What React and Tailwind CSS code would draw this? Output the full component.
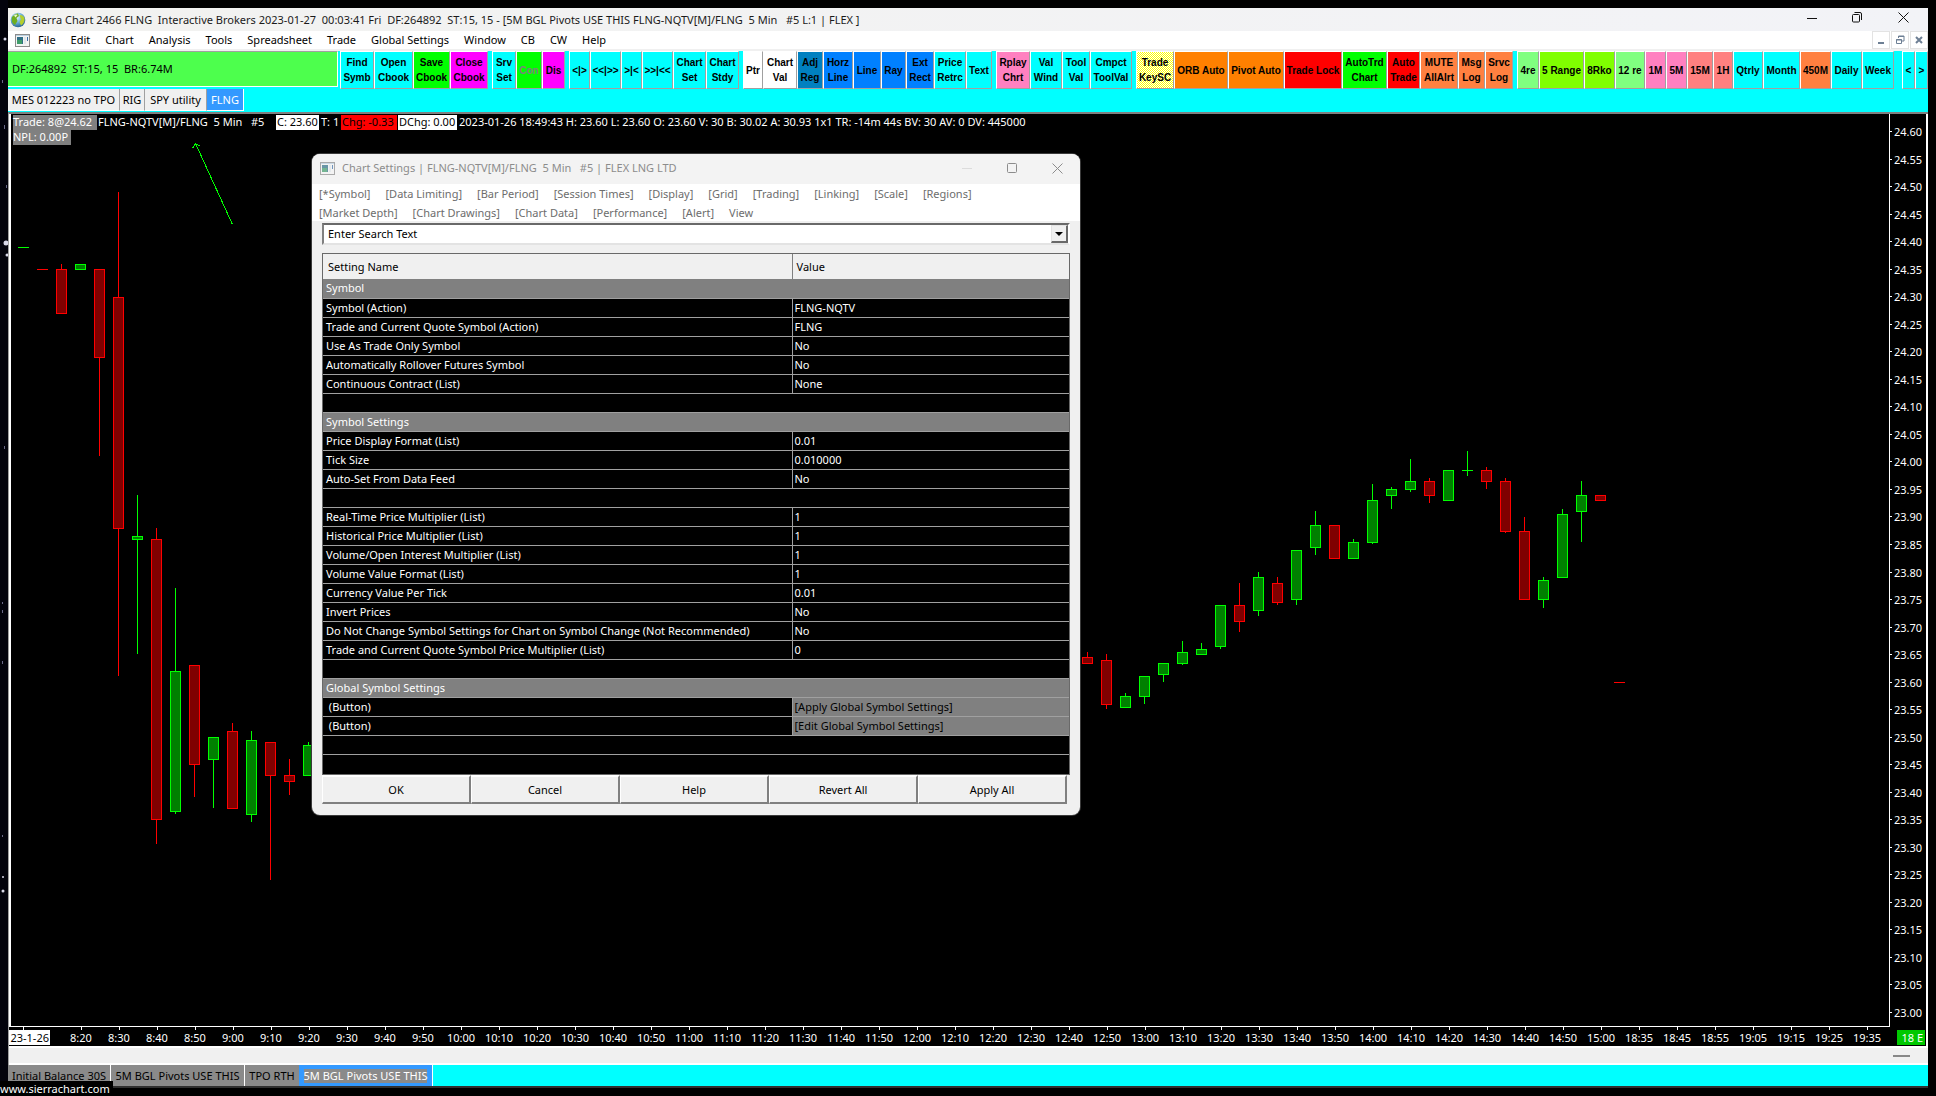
import React from "react";

const CYAN = "bg-[#00ffff]";

const MENUS = ["File", "Edit", "Chart", "Analysis", "Tools", "Spreadsheet", "Trade", "Global Settings", "Window", "CB", "CW", "Help"];

const TOOL_GROUPS = [
  [
    ["Find\nSymb", "w-[34px] bg-[#00ffff]"],
    ["Open\nCbook", "w-[39px] bg-[#00ffff]"],
    ["Save\nCbook", "w-[37px] bg-[#00ff00]"],
    ["Close\nCbook", "w-[38px] bg-[#ff00ff]"],
  ],
  [
    ["Srv\nSet", "w-[24px] bg-[#00ffff]"],
    ["Con", "w-[26px] bg-[#00ff00] text-[#808080]"],
    ["Dis", "w-[23px] bg-[#ff00ff]"],
  ],
  [
    ["<|>", "w-[21px] bg-[#00ffff]"],
    ["<<|>>", "w-[31px] bg-[#00ffff]"],
    [">|<", "w-[21px] bg-[#00ffff]"],
    [">>|<<", "w-[31px] bg-[#00ffff]"],
    ["Chart\nSet", "w-[33px] bg-[#00ffff]"],
    ["Chart\nStdy", "w-[33px] bg-[#00ffff]"],
  ],
  [
    ["Ptr", "w-[20px] bg-white"],
    ["Chart\nVal", "w-[34px] bg-white"],
    ["Adj\nReg", "w-[26px] bg-[#0080c0]"],
    ["Horz\nLine", "w-[30px] bg-[#0080ff]"],
    ["Line", "w-[28px] bg-[#0080ff]"],
    ["Ray", "w-[25px] bg-[#0080ff]"],
    ["Ext\nRect", "w-[28px] bg-[#0080ff]"],
    ["Price\nRetrc", "w-[32px] bg-[#00ffff]"],
    ["Text", "w-[26px] bg-[#00ffff]"],
  ],
  [
    ["Rplay\nChrt", "w-[34px] bg-[#ff80c0]"],
    ["Val\nWind", "w-[32px] bg-[#00ffff]"],
    ["Tool\nVal", "w-[28px] bg-[#00ffff]"],
    ["Cmpct\nToolVal", "w-[42px] bg-[#00ffff]"],
  ],
  [
    ["Trade\nKeySC", "w-[38px] bg-[repeating-conic-gradient(#ffff00_0_25%,#ffffff_0_50%)] bg-[length:2px_2px]"],
    ["ORB Auto", "w-[54px] bg-[#ff8000]"],
    ["Pivot Auto", "w-[56px] bg-[#ff8000]"],
    ["Trade Lock", "w-[58px] bg-[#ff0000]"],
    ["AutoTrd\nChart", "w-[45px] bg-[#00ff00]"],
    ["Auto\nTrade", "w-[33px] bg-[#ff0000]"],
    ["MUTE\nAllAlrt", "w-[38px] bg-[#ff8040]"],
    ["Msg\nLog", "w-[27px] bg-[#ff8040]"],
    ["Srvc\nLog", "w-[28px] bg-[#ff8040]"],
  ],
  [
    ["4re", "w-[22px] bg-[#80ff80]"],
    ["5 Range", "w-[45px] bg-[#80ff00]"],
    ["8Rko", "w-[31px] bg-[#80ff00]"],
    ["12 re", "w-[30px] bg-[#80ff80]"],
    ["1M", "w-[21px] bg-[#ff80c0]"],
    ["5M", "w-[21px] bg-[#ff80c0]"],
    ["15M", "w-[26px] bg-[#ff8080]"],
    ["1H", "w-[20px] bg-[#ff8080]"],
    ["Qtrly", "w-[30px] bg-[#00ffff]"],
    ["Month", "w-[37px] bg-[#00ffff]"],
    ["450M", "w-[31px] bg-[#ff8040]"],
    ["Daily", "w-[31px] bg-[#00ffff]"],
    ["Week", "w-[32px] bg-[#00ffff]"],
  ],
];

const PAGERS = ["<", ">"];

/* bar index, direction, body top, body bottom, high, low */
const BARS = [
  [0, "g", 247, 248],
  [1, "r", 269, 270],
  [2, "r", 269, 314, 264],
  [3, "g", 264, 270],
  [4, "r", 269, 358, 269, 456],
  [5, "r", 297, 529, 192, 676],
  [6, "g", 536, 540, 495, 654],
  [7, "r", 539, 820, 528, 844],
  [8, "g", 671, 812, 588, 814],
  [9, "r", 665, 765, 665, 797],
  [10, "g", 737, 760, 737, 808],
  [11, "r", 731, 809, 723],
  [12, "g", 740, 815, 731, 822],
  [13, "r", 742, 776, 742, 880],
  [14, "r", 775, 782, 759, 795],
  [15, "g", 745, 776, 742],
  [56, "r", 657, 664, 652],
  [57, "r", 660, 705, 654, 709],
  [58, "g", 696, 708, 693],
  [59, "g", 676, 697, 676, 704],
  [60, "g", 663, 675, 663, 682],
  [61, "g", 652, 664, 641, 665],
  [62, "g", 649, 655, 643],
  [63, "g", 605, 647, 605, 649],
  [64, "r", 605, 622, 583, 632],
  [65, "g", 577, 611, 572, 616],
  [66, "r", 583, 603, 577, 605],
  [67, "g", 550, 600, 550, 605],
  [68, "g", 525, 548, 511, 555],
  [69, "r", 525, 559],
  [70, "g", 542, 559, 539],
  [71, "g", 500, 543, 484, 544],
  [72, "g", 489, 496, 487, 509],
  [73, "g", 481, 490, 459, 492],
  [74, "r", 481, 496, 478, 503],
  [75, "g", 470, 501],
  [76, "g", 470, 471, 451, 476],
  [77, "r", 470, 482, 467, 489],
  [78, "r", 481, 532, 478, 533],
  [79, "r", 531, 600, 517],
  [80, "g", 580, 600, 577, 608],
  [81, "g", 514, 578, 509],
  [82, "g", 495, 512, 481, 542],
  [83, "r", 495, 501],
  [84, "r", 682, 683],
];

const PRICES = Array.from({ length: 33 }, (_, i) => (24.6 - i * 0.05).toFixed(2));

const TIMES = [
  ...Array.from({ length: 41 }, (_, i) => {
    const m = 8 * 60 + 20 + i * 10;
    return `${Math.floor(m / 60)}:${String(m % 60).padStart(2, "0")}`;
  }),
  "18:35", "18:45", "18:55", "19:05", "19:15", "19:25", "19:35",
];

const DIALOG_MENUS = [
  ["[*Symbol]", "[Data Limiting]", "[Bar Period]", "[Session Times]", "[Display]", "[Grid]", "[Trading]", "[Linking]", "[Scale]", "[Regions]"],
  ["[Market Depth]", "[Chart Drawings]", "[Chart Data]", "[Performance]", "[Alert]", "View"],
];

const SETTINGS = [
  { head: "Symbol" },
  { name: "Symbol (Action)", value: "FLNG-NQTV" },
  { name: "Trade and Current Quote Symbol (Action)", value: "FLNG" },
  { name: "Use As Trade Only Symbol", value: "No" },
  { name: "Automatically Rollover Futures Symbol", value: "No" },
  { name: "Continuous Contract (List)", value: "None" },
  {},
  { head: "Symbol Settings" },
  { name: "Price Display Format (List)", value: "0.01" },
  { name: "Tick Size", value: "0.010000" },
  { name: "Auto-Set From Data Feed", value: "No" },
  {},
  { name: "Real-Time Price Multiplier (List)", value: "1" },
  { name: "Historical Price Multiplier (List)", value: "1" },
  { name: "Volume/Open Interest Multiplier (List)", value: "1" },
  { name: "Volume Value Format (List)", value: "1" },
  { name: "Currency Value Per Tick", value: "0.01" },
  { name: "Invert Prices", value: "No" },
  { name: "Do Not Change Symbol Settings for Chart on Symbol Change (Not Recommended)", value: "No" },
  { name: "Trade and Current Quote Symbol Price Multiplier (List)", value: "0" },
  {},
  { head: "Global Symbol Settings" },
  { name: " (Button)", button: "[Apply Global Symbol Settings]" },
  { name: " (Button)", button: "[Edit Global Symbol Settings]" },
  {},
];

function GlobeIcon() {
  return (
    <svg width="16" height="16" viewBox="0 0 16 16" aria-hidden="true">
      <defs>
        <radialGradient id="globe" cx="0.4" cy="0.3" r="0.8">
          <stop offset="0" stopColor="#f4fbff" />
          <stop offset="0.45" stopColor="#6fb4dc" />
          <stop offset="1" stopColor="#174f80" />
        </radialGradient>
      </defs>
      <circle cx="8" cy="8" r="7.3" fill="url(#globe)" />
      <path d="M2 5 Q5 1 8 1.5 L9 4 L6.5 6 L7.5 9 L5 13 Q0.500 10 2 5Z" fill="#6fae1e" />
      <path d="M9.500 3 Q14 3 14.500 7 Q14.500 11 11 13.500 L9.500 10 L11 7.500Z" fill="#b5cf2c" />
      <path d="M4 3.500 Q6 2 7.500 3 L5.500 5.500Z" fill="#e9f6c8" />
    </svg>
  );
}

function ChartWindowIcon({ faded }) {
  return (
    <svg width="15" height="13" viewBox="0 0 15 13" className={faded ? "opacity-70" : ""} aria-hidden="true">
      <rect x="0.500" y="0.500" width="14" height="12" fill="#f4f4f4" stroke="#8c8c8c" />
      <rect x="1" y="1" width="13" height="1" fill="#b9cfe0" />
      <rect x="2" y="3" width="6" height="7" fill="#2f6f86" />
      <rect x="2" y="6" width="5" height="4" fill="#3f9c6a" />
      <rect x="9" y="3" width="2" height="7" fill="#dfe6ea" />
      <rect x="12" y="3" width="1" height="4" fill="#3a6ea5" />
    </svg>
  );
}

function TitleBar() {
  return (
    <header className="flex h-[23px] items-center bg-gradient-to-r from-[#f2f2f0] to-[#f2f3f7] pl-0.5 text-[#1a1a1a]">
      <GlobeIcon />
      <h1 className="flex-1 pl-1.5 whitespace-pre">
        {"Sierra Chart 2466 FLNG  Interactive Brokers 2023-01-27  00:03:41 Fri  DF:264892  ST:15, 15 - [5M BGL Pivots USE THIS FLNG-NQTV[M]/FLNG  5 Min   #5 L:1 | FLEX ]"}
      </h1>
      <div className="flex pr-0.5 pb-1">
        <button aria-label="Minimize" className="flex h-5 w-[46px] items-center justify-center">
          <svg width="10" height="10"><path d="M0 5.500H10" stroke="#111" /></svg>
        </button>
        <button aria-label="Restore" className="flex h-5 w-[45px] items-center justify-center">
          <svg width="11" height="11" fill="none" stroke="#111">
            <rect x="0.500" y="2.500" width="7" height="7.500" rx="1" />
            <path d="M2.500 0.500H8Q9.500 0.500 9.500 2V8" />
          </svg>
        </button>
        <button aria-label="Close" className="flex h-5 w-[46px] items-center justify-center">
          <svg width="11" height="11"><path d="M0.500 0.500L10.500 10.500M10.500 0.500L0.500 10.500" stroke="#111" /></svg>
        </button>
      </div>
    </header>
  );
}

function MenuBar() {
  const box = "flex h-[18px] w-[18px] items-center justify-center border border-[#e3e3e3] bg-white";
  return (
    <nav className="flex h-5 items-center border-b-2 border-[#f0f0f0] bg-white pl-[7px] text-black">
      <ChartWindowIcon />
      <div className="flex flex-1 gap-[15px] pl-2">
        {MENUS.map((m) => (
          <button key={m}>{m}</button>
        ))}
      </div>
      <div className="flex gap-px">
        <button aria-label="Minimize chart" className={box}>
          <svg width="10" height="10"><rect x="2" y="7" width="6" height="2" fill="#6d7f94" /></svg>
        </button>
        <button aria-label="Restore chart" className={box}>
          <svg width="10" height="10" fill="none" stroke="#6d7f94">
            <path d="M3.500 3V1H9V6H7M3 1.500H9" />
            <path d="M1.500 4.500H6.500V8.500H1.500ZM1 5H7" />
          </svg>
        </button>
        <button aria-label="Close chart" className={box}>
          <svg width="10" height="10"><path d="M2 2L8 8M8 2L2 8" stroke="#6d7f94" strokeWidth="2" /></svg>
        </button>
      </div>
    </nav>
  );
}

function ToolButton({ label, look }) {
  return (
    <button
      className={`flex h-[38px] shrink-0 items-center justify-center border border-t-white border-r-[#a0a0a0] border-b-[#a0a0a0] border-l-white text-center whitespace-pre ${look}`}
    >
      {label}
    </button>
  );
}

function ToolBar() {
  return (
    <div className={`flex h-[38px] ${CYAN}`}>
      <div className="flex h-9 min-w-0 flex-1 items-center border-t border-r border-b border-t-[#a0a0a0] border-r-white border-b-white bg-[#4dff4d] pl-1 whitespace-pre text-black">
        {"DF:264892  ST:15, 15  BR:6.74M"}
      </div>
      <div className="flex gap-1 pl-0.5 font-['Liberation_Sans',sans-serif] text-[10px] leading-[15px] font-bold text-black">
        {TOOL_GROUPS.map((group, i) => (
          <div key={i} className="flex">
            {group.map(([label, look]) => (
              <ToolButton key={label} label={label} look={look} />
            ))}
          </div>
        ))}
        <div className="flex pl-1">
          {PAGERS.map((p) => (
            <ToolButton key={p} label={p} look="w-[13px] bg-[#00ffff]" />
          ))}
        </div>
      </div>
    </div>
  );
}

function BookTabs() {
  const tab = "h-[22px] border-r border-b border-r-[#a0a0a0] border-b-white bg-[#f0f0f0] text-center text-black";
  return (
    <div className={`flex h-[23px] ${CYAN}`}>
      <button className={`w-[112px] ${tab}`}>MES 012223 no TPO</button>
      <button className={`w-[25px] ${tab}`}>RIG</button>
      <button className={`w-[62px] ${tab}`}>SPY utility</button>
      <button className="h-[22px] w-[37px] border-r border-b border-white bg-[#3399ff] text-center text-white">FLNG</button>
    </div>
  );
}

function Candle({ bar }) {
  const [index, dir, top, bottom, high = top, low = bottom] = bar;
  const x = 23 + index * 19;
  const line = dir === "g" ? "#00ff00" : "#ff0000";
  const fill = dir === "g" ? "#008000" : "#800000";
  return (
    <g>
      <rect x={x} y={high} width="1" height={low - high} fill={line} />
      <rect x={x - 5} y={top} width="11" height={bottom - top} fill={line} />
      {bottom - top > 2 && <rect x={x - 4} y={top + 1} width="9" height={bottom - top - 2} fill={fill} />}
    </g>
  );
}

function ChartInfo() {
  return (
    <div className="absolute top-px left-0.5 leading-[13px] text-white">
      <div className="flex h-[15px] whitespace-pre">
        <span className="w-[84px] bg-[#808080]">Trade: 8@24.62</span>
        <span className="w-[179px] pl-px">{"FLNG-NQTV[M]/FLNG  5 Min   #5"}</span>
        <span className="w-[43px] bg-white px-px text-black">C: 23.60</span>
        <span className="w-[22px] pl-0.5">T: 1</span>
        <span className="w-[56px] bg-[#ff0000] px-px text-black">Chg: -0.33</span>
        <span className="ml-px w-[59px] bg-white px-px text-black">DChg: 0.00</span>
        <span className="pl-0.5">2023-01-26 18:49:43 H: 23.60 L: 23.60 O: 23.60 V: 30 B: 30.02 A: 30.93 1x1 TR: -14m 44s BV: 30 AV: 0 DV: 445000</span>
      </div>
      <span className="block h-[15px] w-[58px] bg-[#808080]">NPL: 0.00P</span>
    </div>
  );
}

function Chart() {
  return (
    <section className="flex min-h-0 flex-1 flex-col border-t-2 border-l border-t-[#808080] border-l-[#a0a0a0] bg-black">
      <div className="flex min-h-0 flex-1">
        <div className="relative flex-1 overflow-hidden border-b border-l-2 border-white">
          <svg className="block h-full w-full" shapeRendering="crispEdges" role="img" aria-label="FLNG 5 minute candlestick chart">
            <g transform="translate(-11 -114)">
              {BARS.map((bar) => (
                <Candle key={bar[0]} bar={bar} />
              ))}
              <path d="M232.500 224.500L195.500 143.500M192.500 148.500L195.500 143.500L200.500 146.500" stroke="#00ff00" fill="none" />
            </g>
          </svg>
          <ChartInfo />
        </div>
        <ol className="flex w-[39px] flex-col border-r-2 border-l border-white pt-1 pb-px text-white">
          {PRICES.map((p) => (
            <li key={p} className="flex flex-1 items-center">
              <span className="h-px w-0.5 bg-white" />
              <span className="pl-0.5 leading-none">{p}</span>
            </li>
          ))}
        </ol>
      </div>
      <div className="flex h-[19px] border-r-2 border-white text-white">
        <div className="flex w-[53px] flex-col">
          <span className="ml-3.5 h-[3px] w-px bg-white" />
          <span className="flex h-[15px] w-[41px] justify-end overflow-hidden bg-white pr-px leading-[15px] text-black">23-1-26</span>
        </div>
        <ol className="flex flex-1 overflow-hidden">
          {TIMES.map((t) => (
            <li key={t} className="flex w-[38px] shrink-0 flex-col items-center">
              <span className="h-[3px] w-px bg-white" />
              <span className="leading-[15px]">{t}</span>
            </li>
          ))}
        </ol>
        <div className="pt-[3px] pr-px">
          <span className="flex h-[15px] w-7 items-center justify-end bg-[#00c800] pr-0.5">18 E</span>
        </div>
      </div>
      <div className="flex h-[19px] items-center justify-end border-t-2 border-b-2 border-white bg-[#f0f0f0] pr-[18px]">
        <span className="h-0.5 w-[17px] bg-[#888888]" />
      </div>
    </section>
  );
}

function SheetTabs() {
  const tab = "border-r border-white bg-[#8a8a8a] text-center text-black";
  return (
    <div className={`flex h-[23px] border-b-2 border-[#303030] ${CYAN}`}>
      <button className={`w-[103px] ${tab}`}>Initial Balance 30S</button>
      <button className={`w-[134px] ${tab}`}>5M BGL Pivots USE THIS</button>
      <button className="w-[54px] bg-[#8a8a8a] text-center text-black">TPO RTH</button>
      <button className="flex w-[134px] items-center justify-center border-r border-white bg-[#3399ff] text-white">
        <span className="bg-[#8a8a8a] leading-[14px]">5M BGL Pivots USE THIS</span>
      </button>
    </div>
  );
}

function SettingsDialog() {
  return (
    <div
      role="dialog"
      aria-labelledby="dialog-title"
      className="absolute top-[154px] left-[312px] w-[768px] overflow-hidden rounded-lg bg-[#f0f0f0] pb-[11px] text-black ring-1 ring-[#3a3a3a]"
    >
      <div className="flex h-[30px] items-center bg-[#f3f3f3] pb-0.5 pl-2 text-[#8c8c8c]">
        <ChartWindowIcon faded />
        <h2 id="dialog-title" className="flex-1 pl-[7px] whitespace-pre">
          {"Chart Settings | FLNG-NQTV[M]/FLNG  5 Min   #5 | FLEX LNG LTD"}
        </h2>
        <button aria-label="Minimize dialog" disabled className="flex w-[45px] justify-center">
          <svg width="10" height="10"><path d="M0 5.500H10" stroke="#dcdcdc" /></svg>
        </button>
        <button aria-label="Maximize dialog" className="flex w-[45px] justify-center">
          <svg width="10" height="10"><rect x="0.500" y="0.500" width="9" height="9" rx="1" fill="none" stroke="#8c8c8c" /></svg>
        </button>
        <button aria-label="Close dialog" className="flex w-[46px] justify-center">
          <svg width="11" height="11"><path d="M0.500 0.500L10.500 10.500M10.500 0.500L0.500 10.500" stroke="#8c8c8c" /></svg>
        </button>
      </div>
      <nav className="h-[37px] bg-white pl-[7px] text-[#6d6d6d]">
        {DIALOG_MENUS.map((row, i) => (
          <div key={i} className="flex h-[19px] items-center gap-[15px]">
            {row.map((m) => (
              <button key={m}>{m}</button>
            ))}
          </div>
        ))}
      </nav>
      <div className="mx-2.5 mt-0.5 flex h-[22px] border-2 border-t-[#696969] border-r-white border-b-[#e3e3e3] border-l-[#808080] bg-white">
        <input aria-label="Search settings" defaultValue="Enter Search Text" className="min-w-0 flex-1 pl-1 outline-none" />
        <button
          aria-label="Show searches"
          className="flex w-[17px] items-center justify-center border border-r-2 border-b-2 border-t-[#e3e3e3] border-r-[#696969] border-b-[#696969] border-l-[#e3e3e3] bg-[#f0f0f0]"
        >
          <svg width="8" height="4"><path d="M0 0H8L4 4Z" fill="#000" /></svg>
        </button>
      </div>
      <div className="mx-2.5 mt-2 h-[522px] border border-[#696969] bg-black">
        <table className="w-full table-fixed border-collapse text-left">
          <colgroup>
            <col className="w-[469px]" />
            <col />
          </colgroup>
          <thead>
            <tr className="h-[25px] bg-[#f0f0f0]">
              <th className="border-r border-[#808080] pl-[5px] font-normal">Setting Name</th>
              <th className="pl-1 font-normal">Value</th>
            </tr>
          </thead>
          <tbody className="text-white">
            {SETTINGS.map((row, i) => {
              if (row.head) {
                return (
                  <tr key={i} className="h-[19px] border-b border-[#a0a0a0] bg-[#808080]">
                    <th colSpan={2} className="p-0 pl-[3px] leading-[18px] font-normal">{row.head}</th>
                  </tr>
                );
              }
              if (!row.name) {
                return (
                  <tr key={i} className="h-[19px] border-b border-[#a0a0a0]">
                    <td colSpan={2} className="p-0" />
                  </tr>
                );
              }
              return (
                <tr key={i} className="h-[19px] border-b border-[#a0a0a0]">
                  <td className="border-r border-[#a0a0a0] p-0 pl-[3px] leading-[18px] whitespace-pre">{row.name}</td>
                  <td className={row.button ? "bg-[#808080] p-0 pl-0.5 leading-[18px] text-black" : "p-0 pl-0.5 leading-[18px]"}>
                    {row.button ? <button>{row.button}</button> : row.value}
                  </td>
                </tr>
              );
            })}
          </tbody>
        </table>
      </div>
      <div className="mr-[13px] ml-2.5 grid grid-cols-5">
        {["OK", "Cancel", "Help", "Revert All", "Apply All"].map((b) => (
          <button
            key={b}
            className="h-[29px] border-t-2 border-r-2 border-b-2 border-l border-t-white border-r-[#808080] border-b-[#808080] border-l-white bg-[#f0f0f0]"
          >
            {b}
          </button>
        ))}
      </div>
    </div>
  );
}

function DesktopEdge() {
  return (
    <svg className="absolute top-0 left-0 h-full w-2" aria-hidden="true">
      <rect width="8" height="100%" fill="#03030c" />
      <g fill="#d8d8e8">
        <circle cx="5" cy="39" r="1.500" />
        <circle cx="6" cy="243" r="2.500" />
        <circle cx="7" cy="255" r="1.500" />
        <circle cx="3" cy="877" r="1" />
        <circle cx="3" cy="891" r="1.500" />
      </g>
      <g fill="#6a6a88">
        <rect x="2" y="80" width="1" height="3" />
        <rect x="4" y="125" width="1" height="4" />
        <rect x="6" y="185" width="1" height="3" />
        <rect x="4" y="446" width="1" height="3" />
        <rect x="2" y="602" width="1" height="2" />
        <rect x="2" y="610" width="1" height="3" />
        <rect x="2" y="661" width="1" height="3" />
        <rect x="2" y="835" width="1" height="2" />
      </g>
    </svg>
  );
}

export default function App() {
  return (
    <div className="relative h-screen overflow-hidden bg-black px-2 pt-2 pb-2 font-['Noto_Sans','Open_Sans',sans-serif] text-[11px] leading-4">
      <DesktopEdge />
      <main className="flex h-full flex-col">
        <TitleBar />
        <MenuBar />
        <ToolBar />
        <BookTabs />
        <Chart />
        <SheetTabs />
      </main>
      <SettingsDialog />
      <a href="#home" className="absolute bottom-0 left-0 h-[15px] w-[113px] bg-black leading-[15px] text-white">
        www.sierrachart.com
      </a>
    </div>
  );
}
